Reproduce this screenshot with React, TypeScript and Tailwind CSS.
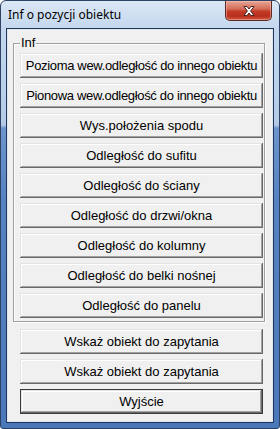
import clsx from 'clsx'

const groupItems = [
  'Pozioma wew.odległość do innego obiektu',
  'Pionowa wew.odległość do innego obiektu',
  'Wys.położenia spodu',
  'Odległość do sufitu',
  'Odległość do ściany',
  'Odległość do drzwi/okna',
  'Odległość do kolumny',
  'Odległość do belki nośnej',
  'Odległość do panelu',
]

const Btn = ({ label, isDefault }: { label: string; isDefault?: boolean }) => (
  <button
    className={clsx(
      "flex h-[25px] w-[243px] shrink-0 items-center justify-center bg-[#f0f0f0] font-['Liberation_Sans',Arial,sans-serif] text-[13px] leading-none whitespace-nowrap text-black",
      label.length > 30 && 'tracking-[-0.33px]',
      isDefault && 'border border-[#3c3c3c]',
      'shadow-[inset_-1px_-1px_0_#696969,inset_1px_1px_0_#e3e3e3,inset_-2px_-2px_0_#a0a0a0,inset_2px_2px_0_#fff]'
    )}
  >
    {label}
  </button>
)

const CloseButton = () => (
  <div className="absolute top-0 right-[7px] flex h-[20px] w-[47px] items-center justify-center rounded-b-[5px] border border-t-0 border-[#5e2a24] bg-[linear-gradient(to_bottom,#e5a696_0%,#d46f5c_40%,#c33b27_55%,#b8301d_80%,#cf5b3f_100%)] shadow-[inset_0_0_0_1px_rgba(255,200,190,0.45)]">
    <svg width="14" height="12" viewBox="0 0 14 12">
      <path
        d="M2 1.5 L5 1.5 L7 4 L9 1.5 L12 1.5 L8.6 6 L12 10.5 L9 10.5 L7 8 L5 10.5 L2 10.5 L5.4 6 Z"
        fill="#fff"
        stroke="#4a2420"
        strokeWidth="1"
        strokeLinejoin="round"
      />
    </svg>
  </div>
)

export default function App() {
  return (
    <div className="relative flex h-[429px] w-[280px] flex-col rounded-t-[6px] rounded-b-[3px] border border-[#2e4363] bg-[linear-gradient(to_bottom,#dbe7f5_0px,#c3d7ee_28px,#b4cbe8_124px,#6d95cc_127px,#5582c1_200px,#4b78b8_100%)] px-[5px] pb-[5px]">
      {/* title bar */}
      <div className="flex h-[27px] shrink-0 items-center pl-[2px] pt-[1px] font-['Noto_Sans',Arial,sans-serif] text-[12px] text-black">
        Inf o pozycji obiektu
      </div>
      <CloseButton />

      {/* client area */}
      <div className="flex flex-1 flex-col border border-[#1f3658] shadow-[inset_0_0_0_1px_#dde6f2]">
        <div className="m-[1px] flex flex-1 flex-col bg-[#f0f0f0]">
          <div className="relative mt-[13px] ml-[5px] flex h-[279px] w-[252px] flex-col gap-[5px] border border-[#a0a0a0] pt-[9px] pl-[6px] shadow-[inset_1px_1px_0_#fff,1px_1px_0_#fff]">
            <span className="absolute top-[-9px] left-[6px] bg-[#f0f0f0] px-[1px] font-['Liberation_Sans',Arial,sans-serif] text-[13px] leading-[16px] text-black">
              Inf
            </span>
            {groupItems.map((item) => (
              <Btn key={item} label={item} />
            ))}
          </div>

          <div className="mt-[7px] ml-[12px] flex flex-col gap-[5px]">
            <Btn label="Wskaż obiekt do zapytania" />
            <Btn label="Wskaż obiekt do zapytania" />
            <Btn label="Wyjście" isDefault />
          </div>
        </div>
      </div>
    </div>
  )
}
